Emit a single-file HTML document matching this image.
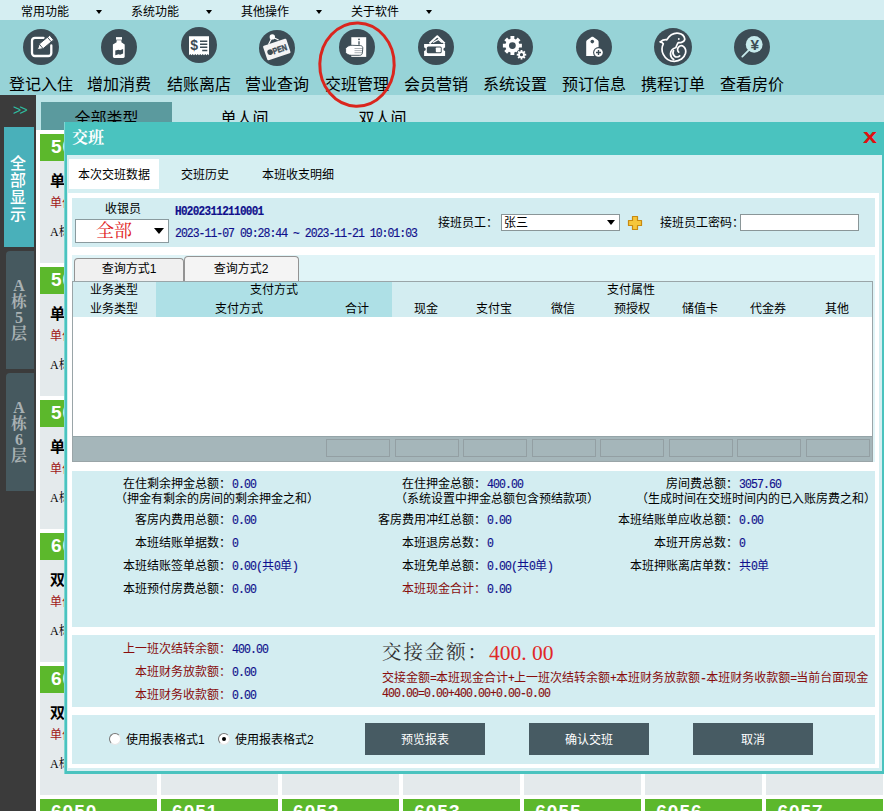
<!DOCTYPE html>
<html lang="zh-CN">
<head>
<meta charset="utf-8">
<title>交班</title>
<style>
*{box-sizing:border-box;margin:0;padding:0}
html,body{width:884px;height:811px;overflow:hidden;background:#fff}
body{position:relative;font-family:"Liberation Sans","Noto Sans CJK SC",sans-serif;font-size:12px;color:#000;line-height:1}
.abs{position:absolute}
.t{position:absolute;white-space:nowrap;font-size:12px;line-height:14px;height:14px}
.n{font-family:"Liberation Mono","Noto Sans CJK SC",monospace;font-size:11.5px;letter-spacing:-0.9px;display:inline-block;transform:scaleY(1.17);transform-origin:0 72%;-webkit-text-stroke:0.15px}
.serif{font-family:"Liberation Serif","Noto Serif CJK SC",serif}
.caret{position:absolute;top:10px;width:0;height:0;border-left:3px solid transparent;border-right:3px solid transparent;border-top:4px solid #000}
.ico{position:absolute;border-radius:50%;background:#3c4c55}
.ico svg{position:absolute;left:0;top:0}
.tl{position:absolute;top:73.500px;width:80px;text-align:center;font-size:16px;line-height:22px;white-space:nowrap}
.vt{position:absolute;width:16px;font-size:16px;line-height:16px;text-align:center}
.card{position:absolute;width:117px;height:129px;background:#e4eaec}
.card .h{position:absolute;left:0;top:0;width:100%;height:27px;background:#5cb82c;color:#fff;font-weight:bold;font-size:19px;line-height:26px;padding-left:11px;letter-spacing:1px}
.card .a{position:absolute;left:10px;top:38px;font-size:15px;font-weight:bold;line-height:18px;white-space:nowrap}
.card .b{position:absolute;left:10px;top:61.500px;font-size:12px;color:#a01818;line-height:14px;white-space:nowrap}
.card .c{position:absolute;left:10px;top:91px;font-size:12px;line-height:14px;white-space:nowrap}
.btn{position:absolute;height:32px;width:120px;background:#475b63;color:#fff;text-align:center;line-height:34px;font-size:12px}
.lab{text-align:right}
.val{color:#10108c}
.dr{color:#880c0c}
</style>
</head>
<body>
<div class="abs" style="left:0px;top:0px;width:884px;height:20px;background:#d5eef2;"></div>
<div class="t " style="left:21px;top:4.5px;">常用功能</div>
<i class="caret" style="left:96px"></i>
<div class="t " style="left:131px;top:4.5px;">系统功能</div>
<i class="caret" style="left:206px"></i>
<div class="t " style="left:241px;top:4.5px;">其他操作</div>
<i class="caret" style="left:316px"></i>
<div class="t " style="left:351px;top:4.5px;">关于软件</div>
<i class="caret" style="left:426px"></i>
<div class="abs" style="left:0px;top:20px;width:884px;height:75px;background:#97d3d7;"></div>
<div class="ico" style="left:23px;top:29px;width:36px;height:36px"><svg viewBox="0 0 36 36" style="width:36px;height:36px"><path d="M20.500 8.800H12a3 3 0 0 0-3 3V24a3 3 0 0 0 3 3h13.300a3 3 0 0 0 3-3V16.500" fill="none" stroke="#fff" stroke-width="2.300" stroke-linecap="round"/><path d="M14.400 20.700L16.260 15.030L26.780 6.290L30.620 10.910L20.100 19.650Z" fill="#fff" stroke="#3c4c55" stroke-width="1" stroke-linejoin="round"/><path d="M16.260 15.030L20.100 19.650M24.470 8.210L28.310 12.830" stroke="#3c4c55" stroke-width="0.900"/></svg></div>
<div class="tl" style="left:1px">登记入住</div>
<div class="ico" style="left:101px;top:29px;width:36px;height:36px"><svg viewBox="0 0 36 36" style="width:36px;height:36px"><path d="M15 8.1h6v2.6h-6z" fill="#fff"/><path d="M15.6 11.3h4.8v2l3.3 2.3v12a1.3 1.3 0 0 1-1.3 1.3h-9.2a1.3 1.3 0 0 1-1.3-1.3v-12l3.7-2.3z" fill="#fff"/><path d="M14.300 21.600l3.200-.800 1.600.500 3-1.300v4.600l-3 1.100-1.600-.500-3.200 1z" fill="#3c4c55"/></svg></div>
<div class="tl" style="left:79px">增加消费</div>
<div class="ico" style="left:181px;top:27px;width:36px;height:36px"><svg viewBox="0 0 36 36" style="width:36px;height:36px"><path d="M8 9.200h20v19l-1.25 -1.3l-1.25 1.3l-1.25 -1.3l-1.25 1.3l-1.25 -1.3l-1.25 1.3l-1.25 -1.3l-1.25 1.3l-1.25 -1.3l-1.25 1.3l-1.25 -1.3l-1.25 1.3l-1.25 -1.3l-1.25 1.3l-1.25 -1.3l-1.25 1.3z" fill="#fff"/><text x="9.200" y="23.400" font-family="Liberation Sans,sans-serif" font-weight="bold" font-size="14" fill="#3c4c55">$</text><path d="M19 14.200h7.300M19 17.300h7.300M19 20.300h7.300M21.200 23.600h5.100" stroke="#3c4c55" stroke-width="1.500"/></svg></div>
<div class="tl" style="left:159px">结账离店</div>
<div class="ico" style="left:259px;top:30px;width:36px;height:36px"><svg viewBox="0 0 36 36" style="width:36px;height:36px"><path d="M9.500 14.400L13.300 7l6.300 3" fill="none" stroke="#fff" stroke-width="1.200"/><circle cx="13.300" cy="6.900" r="2.700" fill="#fff"/><g transform="rotate(-18.300 17.800 19.450)"><rect x="5.550" y="11.850" width="24.500" height="15.200" rx="1.200" fill="#f4f4f4"/><circle cx="10.600" cy="20" r="2.800" fill="#3c4c55"/><text x="13.400" y="23.100" font-family="Liberation Sans,sans-serif" font-weight="bold" font-size="8.500" fill="#3c4c55" stroke="#3c4c55" stroke-width="0.450" textLength="14.500" lengthAdjust="spacingAndGlyphs">PEN</text></g></svg></div>
<div class="tl" style="left:237px">营业查询</div>
<div class="ico" style="left:339px;top:29px;width:36px;height:36px"><svg viewBox="0 0 36 36" style="width:36px;height:36px"><path d="M12.300 8.200h14.900v19.700h-14.900z" fill="#fff"/><circle cx="20" cy="10.300" r="0.900" fill="#3c4c55"/><path d="M20 12.200v3.500" stroke="#3c4c55" stroke-width="1.300"/><path d="M6.600 19.300c1.500-2 4-3.200 6.500-3l8.500.3c1.400.2 2.200 1.200 2.200 2.300l-.4 5c-.2 1.500-1.200 2.400-2.700 2.400h-8.500c-2.400 0-4.400-1-5.600-2.800z" fill="#fff" stroke="#3c4c55" stroke-width="0.900"/><path d="M15.500 19.500h8M15.500 21.600h8M15.500 23.700h7.500" stroke="#3c4c55" stroke-width="0.600" opacity="0.700"/></svg></div>
<div class="tl" style="left:317px">交班管理</div>
<div class="ico" style="left:418px;top:29px;width:36px;height:36px"><svg viewBox="0 0 36 36" style="width:36px;height:36px"><path d="M11.500 14.500L19.300 7.200l7.400 7.300" fill="none" stroke="#fff" stroke-width="1.900" stroke-linejoin="round"/><path d="M15 13.500l5.500-3 3.500 3" fill="none" stroke="#fff" stroke-width="1.200"/><path d="M6.100 15.100h21v3.500a1.700 1.700 0 0 0 0 3.400v4.900h-21v-4.900a1.700 1.700 0 0 0 0-3.400z" fill="#fff"/><rect x="8.800" y="17.400" width="14.900" height="6.800" rx="1.500" fill="#3c4c55"/><rect x="17.800" y="18.400" width="5" height="4.800" rx="0.800" fill="#fff"/></svg></div>
<div class="tl" style="left:396px">会员营销</div>
<div class="ico" style="left:497px;top:29px;width:36px;height:36px"><svg viewBox="0 0 36 36" style="width:36px;height:36px"><path d="M24.90 14.63L24.90 18.57L22.25 18.47L21.57 20.12L23.51 21.93L20.73 24.71L18.92 22.77L17.27 23.45L17.37 26.10L13.43 26.10L13.53 23.45L11.88 22.77L10.07 24.71L7.29 21.93L9.23 20.12L8.55 18.47L5.90 18.57L5.90 14.63L8.55 14.73L9.23 13.08L7.29 11.27L10.07 8.49L11.88 10.43L13.53 9.75L13.43 7.10L17.37 7.10L17.27 9.75L18.92 10.43L20.73 8.49L23.51 11.27L21.57 13.08L22.25 14.73ZM18.80 16.60A3.4 3.4 0 1 0 12.00 16.60A3.4 3.4 0 1 0 18.80 16.60Z" fill="#fff" fill-rule="evenodd"/><circle cx="24.500" cy="25.700" r="5.600" fill="#3c4c55"/><path d="M29.21 24.76L29.21 26.64L27.88 26.60L27.53 27.46L28.49 28.37L27.17 29.69L26.26 28.73L25.40 29.08L25.44 30.41L23.56 30.41L23.60 29.08L22.74 28.73L21.83 29.69L20.51 28.37L21.47 27.46L21.12 26.60L19.79 26.64L19.79 24.76L21.12 24.80L21.47 23.94L20.51 23.03L21.83 21.71L22.74 22.67L23.60 22.32L23.56 20.99L25.44 20.99L25.40 22.32L26.26 22.67L27.17 21.71L28.49 23.03L27.53 23.94L27.88 24.80ZM26.10 25.70A1.6 1.6 0 1 0 22.90 25.70A1.6 1.6 0 1 0 26.10 25.70Z" fill="#fff" fill-rule="evenodd"/></svg></div>
<div class="tl" style="left:475px">系统设置</div>
<div class="ico" style="left:576px;top:29px;width:36px;height:36px"><svg viewBox="0 0 36 36" style="width:36px;height:36px"><path d="M10.200 26.900V12.800c0-.6.300-1.100.700-1.500l4.200-3.100c.8-.6 1.800-.6 2.600 0l4.200 3.100c.400.400.700.900.700 1.500v14.100z" fill="#fff"/><circle cx="16.300" cy="12.600" r="1.800" fill="#3c4c55"/><circle cx="22.500" cy="23.500" r="5.400" fill="#3c4c55"/><circle cx="22.500" cy="23.500" r="4.300" fill="#fff"/><path d="M20 23.500h5M22.500 21v5" stroke="#3c4c55" stroke-width="1.400"/></svg></div>
<div class="tl" style="left:554px">预订信息</div>
<div class="ico" style="left:654px;top:28px;width:38px;height:38px"><svg viewBox="0 0 38 38" style="width:38px;height:38px"><g fill="none" stroke="#fff" stroke-width="1.700" stroke-linecap="round" stroke-linejoin="round"><path d="M6.300 13.800c2.200-1.800 4.500-2.300 6.500-2 2.500-4.200 7-7.200 12-6.500 3.200.5 5.600 2.800 6 5.800-.2 1.600-1.600 2.800-3.300 3.300-1.300.4-2.300.300-3.300.100-.800 1.700-1.600 3-2.200 4.800"/><path d="M6.300 13.800c1.300.3 2.300 1 3 2-1.600 3.200-1.800 7 0 10.500 2 4 6 7 11 7 5.500 0 10-3.500 11.200-8 .600-2.600 0-5-1.600-6.500-1.700-1.400-4-1.200-5.400.300-1.300 1.500-1.200 3.800.200 5"/><path d="M21.500 19.800c-2.700.700-4.800 3-5 6 0 2.400 1.200 4.500 3.200 5.700"/><path d="M19.500 22.500c-.900 1.800-.700 4 .800 5.500 1.600 1.400 4 1.300 5.400-.200"/></g><circle cx="24.800" cy="11" r="0.900" fill="#fff"/></svg></div>
<div class="tl" style="left:633px">携程订单</div>
<div class="ico" style="left:734px;top:29px;width:36px;height:36px"><svg viewBox="0 0 36 36" style="width:36px;height:36px"><path d="M8.300 27.600l6.500-6.500" stroke="#c6eaec" stroke-width="1.800" stroke-linecap="round"/><circle cx="20.200" cy="15.400" r="8.400" fill="#c6eaec"/><text x="20.900" y="20.900" text-anchor="middle" font-family="Liberation Sans,sans-serif" font-weight="bold" font-size="15.500" fill="#3c4c55">¥</text></svg></div>
<div class="tl" style="left:712px">查看房价</div>
<div class="abs" style="left:0px;top:95px;width:884px;height:35px;background:#bce4e7;"></div>
<div class="abs" style="left:41px;top:102px;width:131px;height:28px;background:#5b9a9e;"></div>
<div class="abs" style="left:41px;top:108px;width:131px;text-align:center;font-size:16px;line-height:22px">全部类型</div>
<div class="abs" style="left:179px;top:108px;width:131px;text-align:center;font-size:16px;line-height:22px">单人间</div>
<div class="abs" style="left:317px;top:108px;width:131px;text-align:center;font-size:16px;line-height:22px">双人间</div>
<svg class="abs" style="left:310px;top:14px;width:95px;height:100px;overflow:visible" viewBox="0 0 95 100"><ellipse cx="47" cy="50.600" rx="37.200" ry="41.600" fill="none" stroke="#da261e" stroke-width="3" transform="rotate(1.500 47 50.600)"/></svg>
<div class="abs" style="left:0px;top:95px;width:36px;height:716px;background:#3b3b3b;"></div>
<div class="abs" style="left:13px;top:102px;width:20px;font-size:14px;line-height:16px;color:#2fbca0;letter-spacing:-1.8px">&gt;&gt;</div>
<div class="abs" style="left:4px;top:127px;width:30px;height:120px;background:#49b0ba;"></div>
<div class="vt" style="left:10px;top:155px;color:#fff;font-weight:500;line-height:17px">全<br>部<br>显<br>示</div>
<div class="abs" style="left:6px;top:251px;width:28px;height:118px;background:#46595f;border-top-left-radius:4px"></div>
<div class="vt serif" style="left:11px;top:278px;color:#a9b1b3;font-weight:bold">A<br>栋<br>5<br>层</div>
<div class="abs" style="left:6px;top:373px;width:28px;height:118px;background:#46595f;border-top-left-radius:4px"></div>
<div class="vt serif" style="left:11px;top:400px;color:#a9b1b3;font-weight:bold">A<br>栋<br>6<br>层</div>
<div class="card" style="left:40.0px;top:134px"><div class="h">5001</div><div class="a">单人间</div><div class="b">单价:128</div><div class="c serif">A栋5层</div></div>
<div class="card" style="left:40.0px;top:267px"><div class="h">5009</div><div class="a">单人间</div><div class="b">单价:128</div><div class="c serif">A栋5层</div></div>
<div class="card" style="left:40.0px;top:400px"><div class="h">5017</div><div class="a">单人间</div><div class="b">单价:128</div><div class="c serif">A栋5层</div></div>
<div class="card" style="left:40.0px;top:533px"><div class="h">6001</div><div class="a">双人间</div><div class="b">单价:128</div><div class="c serif">A栋6层</div></div>
<div class="card" style="left:40.0px;top:666px"><div class="h">6009</div><div class="a">双人间</div><div class="b">单价:128</div><div class="c serif">A栋6层</div></div>
<div class="card" style="left:161.1px;top:666px"><div class="h">6010</div><div class="a">双人间</div><div class="b">单价:128</div><div class="c serif">A栋6层</div></div>
<div class="card" style="left:282.1px;top:666px"><div class="h">6011</div><div class="a">双人间</div><div class="b">单价:128</div><div class="c serif">A栋6层</div></div>
<div class="card" style="left:403.2px;top:666px"><div class="h">6012</div><div class="a">双人间</div><div class="b">单价:128</div><div class="c serif">A栋6层</div></div>
<div class="card" style="left:524.3px;top:666px"><div class="h">6013</div><div class="a">双人间</div><div class="b">单价:128</div><div class="c serif">A栋6层</div></div>
<div class="card" style="left:645.3px;top:666px"><div class="h">6015</div><div class="a">双人间</div><div class="b">单价:128</div><div class="c serif">A栋6层</div></div>
<div class="card" style="left:766.4px;top:666px"><div class="h">6016</div><div class="a">双人间</div><div class="b">单价:128</div><div class="c serif">A栋6层</div></div>
<div class="card" style="left:40.0px;top:799px"><div class="h">6050</div><div class="a">双人间</div><div class="b">单价:128</div><div class="c serif">A栋6层</div></div>
<div class="card" style="left:161.1px;top:799px"><div class="h">6051</div><div class="a">双人间</div><div class="b">单价:128</div><div class="c serif">A栋6层</div></div>
<div class="card" style="left:282.1px;top:799px"><div class="h">6052</div><div class="a">双人间</div><div class="b">单价:128</div><div class="c serif">A栋6层</div></div>
<div class="card" style="left:403.2px;top:799px"><div class="h">6053</div><div class="a">双人间</div><div class="b">单价:128</div><div class="c serif">A栋6层</div></div>
<div class="card" style="left:524.3px;top:799px"><div class="h">6055</div><div class="a">双人间</div><div class="b">单价:128</div><div class="c serif">A栋6层</div></div>
<div class="card" style="left:645.3px;top:799px"><div class="h">6056</div><div class="a">双人间</div><div class="b">单价:128</div><div class="c serif">A栋6层</div></div>
<div class="card" style="left:766.4px;top:799px"><div class="h">6057</div><div class="a">双人间</div><div class="b">单价:128</div><div class="c serif">A栋6层</div></div>
<div class="abs" style="left:64px;top:122px;width:826px;height:652px;background:#4ac3bf;border-left:1px solid #7fd6d2"></div>
<div class="abs serif" style="left:72px;top:128px;font-size:16px;line-height:20px;font-weight:bold;color:#fff">交班</div>
<div class="abs" style="left:862px;top:123.5px;width:16px;text-align:center;font-size:21px;line-height:24px;font-weight:bold;color:#e01010;transform:scaleX(1.2)">x</div>
<div class="abs" style="left:67px;top:155px;width:815px;height:616px;background:#d6eff2;"></div>
<div class="abs" style="left:69px;top:159px;width:90px;height:30px;background:#fff;"></div>
<div class="t " style="left:78px;top:168px;">本次交班数据</div>
<div class="t " style="left:181px;top:168px;">交班历史</div>
<div class="t " style="left:262px;top:168px;">本班收支明细</div>
<div class="abs" style="left:68px;top:193px;width:811px;height:575px;background:#fff;"></div>
<div class="abs" style="left:72px;top:198px;width:803px;height:49px;background:#d3edf1;"></div>
<div class="t " style="left:105px;top:202px;">收银员</div>
<div class="abs" style="left:75px;top:219px;width:94px;height:24px;background:#fff;border:1px solid #8a9a9e"></div>
<div class="abs serif" style="left:96px;top:220px;font-size:18px;line-height:22px;color:#e02020;white-space:nowrap">全部</div>
<div class="abs" style="left:154px;top:228px;width:0;height:0;border-left:5px solid transparent;border-right:5px solid transparent;border-top:6px solid #000"></div>
<div class="t n val" style="left:175px;top:204.5px;font-weight:bold;font-size:11px;letter-spacing:-0.7px">H02023112110001</div>
<div class="t n val" style="left:175px;top:226.7px;letter-spacing:-1px">2023-11-07 09:28:44 ~ 2023-11-21 10:01:03</div>
<div class="t " style="left:438px;top:216px;">接班员工：</div>
<div class="abs" style="left:501px;top:213.5px;width:119px;height:17.5px;background:#fff;border:1px solid #8a9698"></div>
<div class="t " style="left:504px;top:216px;">张三</div>
<div class="abs" style="left:607px;top:220px;width:0;height:0;border-left:4px solid transparent;border-right:4px solid transparent;border-top:5px solid #000"></div>
<svg class="abs" style="left:627px;top:215px;width:16px;height:16px" viewBox="0 0 16 16"><path d="M5.5 1.5h5v4h4v5h-4v4h-5v-4h-4v-5h4z" fill="#f6c63a" stroke="#c88a10" stroke-width="1.2" stroke-linejoin="round"/></svg>
<div class="t " style="left:660px;top:216px;">接班员工密码：</div>
<div class="abs" style="left:740px;top:213.5px;width:119px;height:17.5px;background:#fff;border:1px solid #8a9698"></div>
<div class="abs" style="left:72px;top:255px;width:803px;height:207px;background:#e0f4f7;"></div>
<div class="abs" style="left:74px;top:258px;width:110px;height:23px;background:#f0f0f0;border:1px solid #939393;border-bottom:none;border-radius:4px 4px 0 0"></div>
<div class="abs" style="left:184px;top:256px;width:115px;height:26px;background:#f4f4f4;border:1px solid #939393;border-bottom:none;border-radius:4px 4px 0 0"></div>
<div class="t " style="left:69px;width:120px;text-align:center;top:262px;">查询方式1</div>
<div class="t " style="left:181px;width:120px;text-align:center;top:261.5px;">查询方式2</div>
<div class="abs" style="left:72px;top:281px;width:801px;height:181px;background:#fff;border:1px solid #9aa5a8"></div>
<div class="abs" style="left:73px;top:282px;width:799px;height:35px;background:#d3edf1;"></div>
<div class="abs" style="left:156px;top:282px;width:236px;height:35px;background:#aee0e6;"></div>
<div class="t " style="left:54px;width:120px;text-align:center;top:283px;">业务类型</div>
<div class="t " style="left:54px;width:120px;text-align:center;top:302px;">业务类型</div>
<div class="t " style="left:214px;width:120px;text-align:center;top:283px;">支付方式</div>
<div class="t " style="left:179px;width:120px;text-align:center;top:302px;">支付方式</div>
<div class="t " style="left:297px;width:120px;text-align:center;top:302px;">合计</div>
<div class="t " style="left:571px;width:120px;text-align:center;top:283px;">支付属性</div>
<div class="t " style="left:366px;width:120px;text-align:center;top:302px;">现金</div>
<div class="t " style="left:434px;width:120px;text-align:center;top:302px;">支付宝</div>
<div class="t " style="left:503px;width:120px;text-align:center;top:302px;">微信</div>
<div class="t " style="left:572px;width:120px;text-align:center;top:302px;">预授权</div>
<div class="t " style="left:640px;width:120px;text-align:center;top:302px;">储值卡</div>
<div class="t " style="left:708px;width:120px;text-align:center;top:302px;">代金券</div>
<div class="t " style="left:777px;width:120px;text-align:center;top:302px;">其他</div>
<div class="abs" style="left:73px;top:436px;width:799px;height:25px;background:#a5b6ba;border-top:1px solid #94a4a8"></div>
<div class="abs" style="left:326.0px;top:439px;width:64px;height:18px;border:1px solid #939fa3"></div>
<div class="abs" style="left:394.5px;top:439px;width:64px;height:18px;border:1px solid #939fa3"></div>
<div class="abs" style="left:463.0px;top:439px;width:64px;height:18px;border:1px solid #939fa3"></div>
<div class="abs" style="left:531.5px;top:439px;width:64px;height:18px;border:1px solid #939fa3"></div>
<div class="abs" style="left:600.0px;top:439px;width:64px;height:18px;border:1px solid #939fa3"></div>
<div class="abs" style="left:668.5px;top:439px;width:64px;height:18px;border:1px solid #939fa3"></div>
<div class="abs" style="left:737.0px;top:439px;width:64px;height:18px;border:1px solid #939fa3"></div>
<div class="abs" style="left:805.5px;top:439px;width:64px;height:18px;border:1px solid #939fa3"></div>
<div class="abs" style="left:72px;top:471px;width:803px;height:156px;background:#d3edf1;"></div>
<div class="t lab " style="right:653px;top:476.5px;">在住剩余押金总额：</div>
<div class="t val" style="left:232px;top:476.5px;"><span class="n">0.00</span></div>
<div class="t lab " style="right:653px;top:512.5px;">客房内费用总额：</div>
<div class="t val" style="left:232px;top:512.5px;"><span class="n">0.00</span></div>
<div class="t lab " style="right:653px;top:535.5px;">本班结账单据数：</div>
<div class="t val" style="left:232px;top:535.5px;"><span class="n">0</span></div>
<div class="t lab " style="right:653px;top:559px;">本班结账签单总额：</div>
<div class="t val" style="left:232px;top:559px;"><span class="n">0.00(</span>共<span class="n">0</span>单<span class="n">)</span></div>
<div class="t lab " style="right:653px;top:582px;">本班预付房费总额：</div>
<div class="t val" style="left:232px;top:582px;"><span class="n">0.00</span></div>
<div class="t lab " style="right:398px;top:476.5px;">在住押金总额：</div>
<div class="t val" style="left:487px;top:476.5px;"><span class="n">400.00</span></div>
<div class="t lab " style="right:398px;top:512.5px;">客房费用冲红总额：</div>
<div class="t val" style="left:487px;top:512.5px;"><span class="n">0.00</span></div>
<div class="t lab " style="right:398px;top:535.5px;">本班退房总数：</div>
<div class="t val" style="left:487px;top:535.5px;"><span class="n">0</span></div>
<div class="t lab " style="right:398px;top:559px;">本班免单总额：</div>
<div class="t val" style="left:487px;top:559px;"><span class="n">0.00(</span>共<span class="n">0</span>单<span class="n">)</span></div>
<div class="t lab dr" style="right:398px;top:582px;">本班现金合计：</div>
<div class="t val" style="left:487px;top:582px;"><span class="n">0.00</span></div>
<div class="t lab " style="right:146px;top:476.5px;">房间费总额：</div>
<div class="t val" style="left:739px;top:476.5px;"><span class="n">3057.60</span></div>
<div class="t lab " style="right:146px;top:512.5px;">本班结账单应收总额：</div>
<div class="t val" style="left:739px;top:512.5px;"><span class="n">0.00</span></div>
<div class="t lab " style="right:146px;top:535.5px;">本班开房总数：</div>
<div class="t val" style="left:739px;top:535.5px;"><span class="n">0</span></div>
<div class="t lab " style="right:146px;top:559px;">本班押账离店单数：</div>
<div class="t val" style="left:739px;top:559px;">共<span class="n">0</span>单</div>
<div class="t " style="left:115px;top:492px;">（押金有剩余的房间的剩余押金之和）</div>
<div class="t " style="left:395px;top:492px;">（系统设置中押金总额包含预结款项）</div>
<div class="t " style="left:636px;top:492px;">（生成时间在交班时间内的已入账房费之和）</div>
<div class="abs" style="left:72px;top:635px;width:803px;height:72px;background:#d3edf1;"></div>
<div class="t lab dr" style="right:653px;top:642px;">上一班次结转余额：</div>
<div class="t val" style="left:232px;top:642px;"><span class="n">400.00</span></div>
<div class="t lab dr" style="right:653px;top:664.5px;">本班财务放款额：</div>
<div class="t val" style="left:232px;top:664.5px;"><span class="n">0.00</span></div>
<div class="t lab dr" style="right:653px;top:687.5px;">本班财务收款额：</div>
<div class="t val" style="left:232px;top:687.5px;"><span class="n">0.00</span></div>
<div class="abs serif" style="left:382px;top:640px;font-size:19.5px;line-height:26px;letter-spacing:1.9px;color:#333;white-space:nowrap">交接金额：</div>
<div class="abs serif" style="left:489px;top:639.5px;font-size:21.5px;line-height:26px;color:#e02828;white-space:nowrap">400<span style="display:inline-block;width:10.7px">.</span>00</div>
<div class="t dr" style="left:382px;top:670.5px;">交接金额<span class="n">=</span>本班现金合计<span class="n">+</span>上一班次结转余额<span class="n">+</span>本班财务放款额<span class="n">-</span>本班财务收款额<span class="n">=</span>当前台面现金</div>
<div class="t dr n" style="left:382px;top:687px;">400.00=0.00+400.00+0.00-0.00</div>
<div class="abs" style="left:72px;top:715px;width:803px;height:49px;background:#d3edf1;"></div>
<div class="abs" style="left:109px;top:733px;width:12px;height:12px;border-radius:50%;background:#fff;border:1px solid;border-color:#777 #e6e6e6 #e6e6e6 #777"></div>
<div class="t " style="left:126px;top:733px;">使用报表格式1</div>
<div class="abs" style="left:218px;top:733px;width:12px;height:12px;border-radius:50%;background:#fff;border:1px solid;border-color:#777 #e6e6e6 #e6e6e6 #777"></div><div class="abs" style="left:222px;top:737px;width:4px;height:4px;border-radius:50%;background:#000"></div>
<div class="t " style="left:235px;top:733px;">使用报表格式2</div>
<div class="btn" style="left:365px;top:723px">预览报表</div>
<div class="btn" style="left:529px;top:723px">确认交班</div>
<div class="btn" style="left:693px;top:723px">取消</div>
</body>
</html>
